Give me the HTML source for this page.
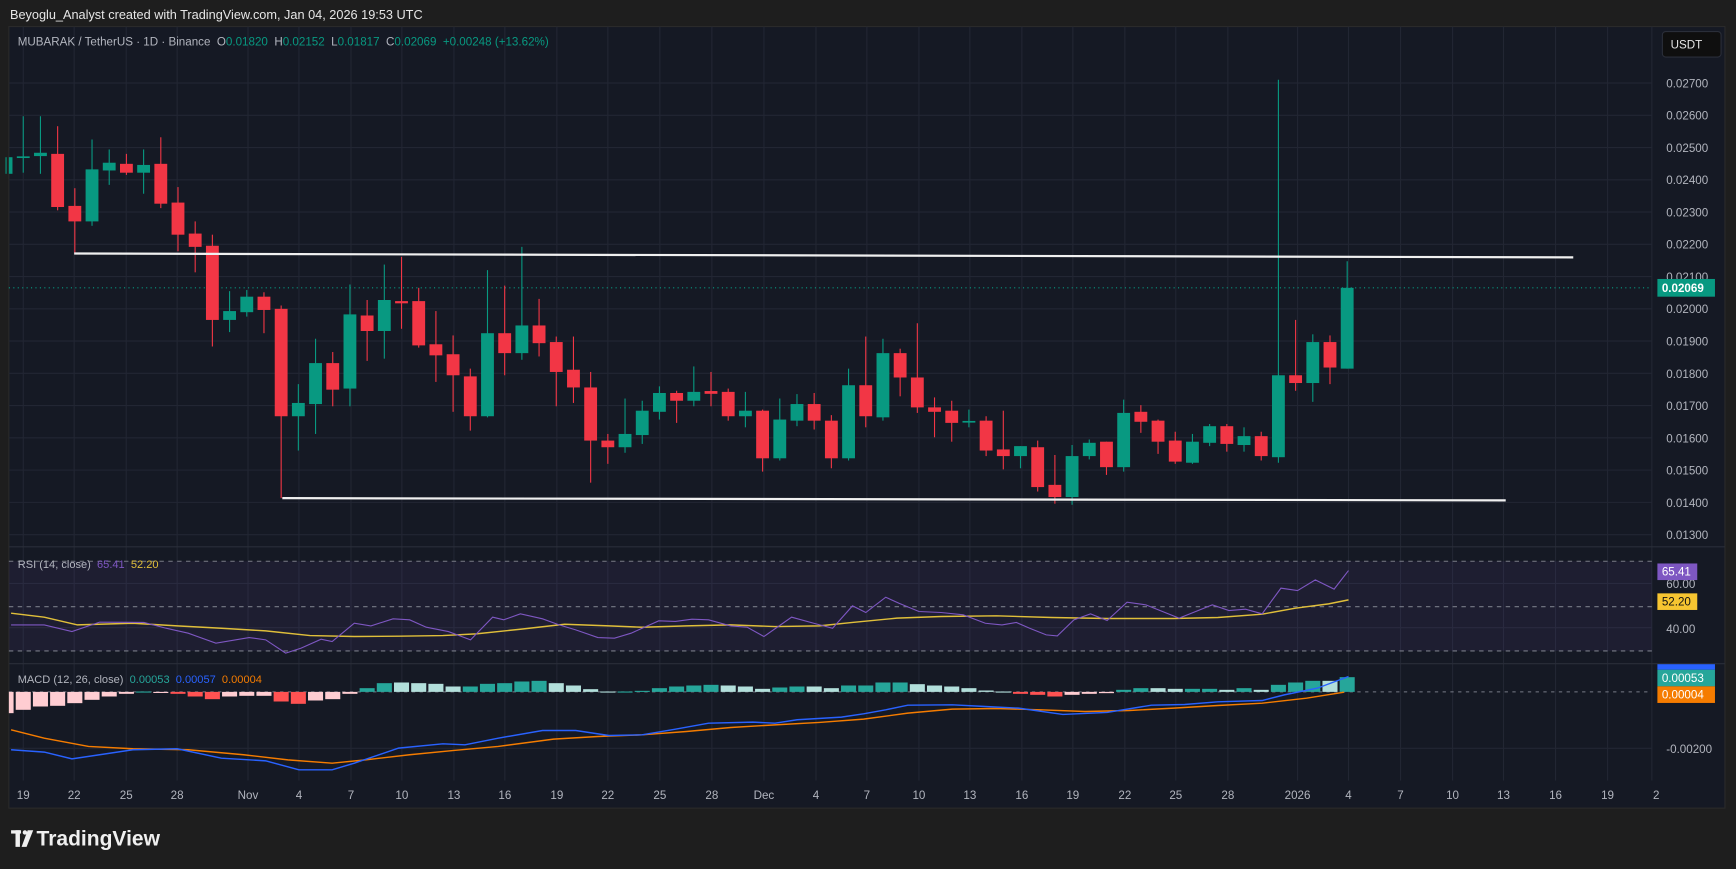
<!DOCTYPE html>
<html><head><meta charset="utf-8"><style>
html,body{margin:0;padding:0;background:#1e1e1e;overflow:hidden}
svg{display:block}
text{font-family:"Liberation Sans",sans-serif}
.pre{white-space:pre}
</style></head><body>
<svg id="s" width="1736" height="869" viewBox="0 0 1568 785" preserveAspectRatio="none" xmlns="http://www.w3.org/2000/svg">
<rect x="0" y="0" width="1568" height="785" fill="#1e1e1e"/>
<text x="9" y="17" font-size="11.5" fill="#e6e6e6">Beyoglu_Analyst created with TradingView.com, Jan 04, 2026 19:53 UTC</text>
<rect x="8" y="24" width="1550" height="706" fill="#151924" stroke="#2a2a2a" stroke-width="1"/>
<g id="grid" stroke="#222633" stroke-width="1"></g>
<line x1="8" y1="494" x2="1558" y2="494" stroke="#2a2e39"/>
<line x1="8" y1="599.5" x2="1558" y2="599.5" stroke="#2a2e39"/>
<rect x="8" y="507" width="1484" height="81" fill="#7e57c2" fill-opacity="0.09"/>
<g stroke="#787b86" stroke-dasharray="4,4" stroke-width="1">
<line x1="8" y1="507" x2="1492" y2="507"/><line x1="8" y1="548" x2="1492" y2="548"/><line x1="8" y1="588" x2="1492" y2="588"/>
<line x1="8" y1="625" x2="1492" y2="625" stroke-dasharray="3,4"/>
</g>
<line x1="8" y1="260" x2="1492" y2="260" stroke="#089981" stroke-dasharray="1,3"/>
<g id="candles"></g>
<g id="hist"></g>
<line x1="67" y1="229" x2="1421" y2="232.5" stroke="#f0f0f0" stroke-width="2"/>
<line x1="255" y1="450" x2="1360" y2="452" stroke="#f0f0f0" stroke-width="2"/>
<polyline id="rsima" fill="none" stroke="#e0bf3a" stroke-width="1.3"/>
<polyline id="rsi" fill="none" stroke="#7e57c2" stroke-width="1"/>
<polyline id="sig" fill="none" stroke="#f57c00" stroke-width="1.3"/>
<polyline id="macd" fill="none" stroke="#2962ff" stroke-width="1.3"/>
<text class="pre" x="16" y="41" font-size="10.5" fill="#b2b5be">MUBARAK / TetherUS · 1D · Binance  <tspan>O</tspan><tspan fill="#089981">0.01820</tspan>  <tspan>H</tspan><tspan fill="#089981">0.02152</tspan>  <tspan>L</tspan><tspan fill="#089981">0.01817</tspan>  <tspan>C</tspan><tspan fill="#089981">0.02069  +0.00248 (+13.62%)</tspan></text>
<rect x="1501.5" y="28.5" width="53" height="23" rx="3" fill="#0f0f0f" stroke="#2a2e39"/>
<text x="1509" y="44" font-size="10.5" fill="#e6e6e6">USDT</text>
<g id="plab" font-size="10.5" fill="#b2b5be"></g>
<rect x="1497" y="252" width="52" height="16" fill="#089981"/>
<text x="1501" y="264" font-size="10.5" fill="#fff" font-weight="bold">0.02069</text>
<text class="pre" x="16" y="513" font-size="10" fill="#b2b5be">RSI (14, close)  <tspan fill="#7e57c2">65.41</tspan>  <tspan fill="#e0bf3a">52.20</tspan></text>
<text x="1505" y="531" font-size="10.5" fill="#b2b5be">60.00</text>
<text x="1505" y="572" font-size="10.5" fill="#b2b5be">40.00</text>
<rect x="1497" y="509" width="36" height="15" fill="#7e57c2"/><text x="1501" y="520" font-size="10.5" fill="#fff">65.41</text>
<rect x="1497" y="536" width="36" height="15" fill="#f7c531"/><text x="1501" y="547" font-size="10.5" fill="#111">52.20</text>
<text class="pre" x="16" y="617" font-size="10" fill="#b2b5be">MACD (12, 26, close)  <tspan fill="#26a69a">0.00053</tspan>  <tspan fill="#2962ff">0.00057</tspan>  <tspan fill="#f57c00">0.00004</tspan></text>
<rect x="1497" y="600" width="52" height="5" fill="#2962ff"/>
<rect x="1497" y="605" width="52" height="15" fill="#26a69a"/><text x="1501" y="616" font-size="10.5" fill="#fff">0.00053</text>
<rect x="1497" y="620" width="52" height="15" fill="#f57c00"/><text x="1501" y="631" font-size="10.5" fill="#fff">0.00004</text>
<text x="1505" y="680" font-size="10.5" fill="#b2b5be">-0.00200</text>
<g id="tlab" font-size="10.5" fill="#b2b5be" text-anchor="middle">
<text x="21" y="722">19</text><text x="67" y="722">22</text><text x="114" y="722">25</text><text x="160" y="722">28</text><text x="224" y="722">Nov</text><text x="270" y="722">4</text><text x="317" y="722">7</text><text x="363" y="722">10</text><text x="410" y="722">13</text><text x="456" y="722">16</text><text x="503" y="722">19</text><text x="549" y="722">22</text><text x="596" y="722">25</text><text x="643" y="722">28</text><text x="690" y="722">Dec</text><text x="737" y="722">4</text><text x="783" y="722">7</text><text x="830" y="722">10</text><text x="876" y="722">13</text><text x="923" y="722">16</text><text x="969" y="722">19</text><text x="1016" y="722">22</text><text x="1062" y="722">25</text><text x="1109" y="722">28</text><text x="1172" y="722">2026</text><text x="1218" y="722">4</text><text x="1265" y="722">7</text><text x="1312" y="722">10</text><text x="1358" y="722">13</text><text x="1405" y="722">16</text><text x="1452" y="722">19</text><text x="1496" y="722">2</text>
</g>
<g fill="#f0f0f0"><rect x="10" y="750" width="9" height="3"/><rect x="14" y="750" width="4" height="15"/><circle cx="22.5" cy="752" r="2"/><path d="M25 750 L30 750 L24 765 L19.5 765 Z"/></g>
<text x="33" y="764" font-size="19" font-weight="bold" fill="#f0f0f0">TradingView</text>
</svg>
<script>
var NS="http://www.w3.org/2000/svg";
function el(p,t,a){var e=document.createElementNS(NS,t);for(var k in a)e.setAttribute(k,a[k]);document.getElementById(p).appendChild(e);return e;}
var xs=[21,67,114,160,224,270,317,363,410,456,503,549,596,643,690,737,783,830,876,923,969,1016,1062,1109,1172,1218,1265,1312,1358,1405,1452,1492];
xs.forEach(function(x){el("grid","line",{x1:x,y1:24,x2:x,y2:705});});
var labs=["0.02700","0.02600","0.02500","0.02400","0.02300","0.02200","0.02100","0.02000","0.01900","0.01800","0.01700","0.01600","0.01500","0.01400","0.01300"];
labs.forEach(function(l,i){var y=75+i*29.14;el("grid","line",{x1:8,y1:y,x2:1492,y2:y});var t=el("plab","text",{x:1505,y:y+4});t.textContent=l;});
[527,567].forEach(function(y){el("grid","line",{x1:8,y1:y,x2:1492,y2:y});});
el("grid","line",{x1:8,y1:676,x2:1492,y2:676});
var C=[[-1,157,142,142,157],[0,142,142,105,156],[1,141,138,105,157],[2,139,187,114,190],[3,186,200,170,229],[4,200,153,126,204],[5,154,147,135,167],[6,148,156,139,158],[7,156,149,135,175],[8,148,184,124,188],[9,183,212,169,227],[10,211,223,200,246],[11,222,289,212,313],[12,289,281,263,300],[13,282,268,262,286],[14,268,280,264,301],[15,279,376,276,450],[16,376,364,347,407],[17,365,328,306,392],[18,328,352,318,367],[19,351,284,257,367],[20,285,299,271,326],[21,299,271,239,324],[22,272,274,232,297],[23,272,312,260,314],[24,311,321,281,345],[25,320,339,303,372],[26,340,376,333,389],[27,376,301,244,377],[28,301,319,258,339],[29,319,294,223,325],[30,294,310,270,322],[31,309,336,304,367],[32,334,350,304,364],[33,350,398,336,436],[34,398,404,392,419],[35,404,392,360,409],[36,393,371,362,401],[37,372,355,349,379],[38,355,362,353,382],[39,362,354,331,367],[40,354,355,336,367],[41,354,376,351,380],[42,376,371,354,386],[43,371,414,370,426],[44,414,379,360,416],[45,380,365,356,385],[46,365,380,355,388],[47,380,414,375,423],[48,414,348,333,416],[49,348,376,304,386],[50,377,319,306,380],[51,319,341,315,358],[52,341,368,292,373],[53,368,372,359,395],[54,371,382,362,399],[55,381,381,370,386],[56,380,407,376,412],[57,406,412,371,424],[58,412,403,403,423],[59,404,440,398,444],[60,438,449,411,455],[61,449,412,402,456],[62,412,400,397,415],[63,399,422,399,429],[64,422,373,361,426],[65,372,381,366,391],[66,380,399,379,410],[67,398,417,390,419],[68,418,399,392,419],[69,400,385,383,403],[70,385,401,383,408],[71,402,394,386,408],[72,394,412,390,416],[73,413,339,72,418],[74,339,346,289,353],[75,346,309,302,363],[76,309,332,303,347],[77,333,260,236,333]];
C.forEach(function(c){var x=21+15.53*c[0];var up=c[2]<=c[1]&&!(c[2]==c[1]&&c[0]!=0&&c[0]!=55);var col=up?"#089981":"#f23645";
el("candles","line",{x1:x,y1:c[3],x2:x,y2:c[4],stroke:col,"stroke-width":1});
var t=Math.min(c[1],c[2]),b=Math.max(c[1],c[2]);if(b-t<1.5){t-=0.75;b+=0.75;}
el("candles","rect",{x:Math.max(8,x-5.8),y:t,width:11.6-(x-5.8<8?8-(x-5.8):0),height:b-t,fill:col});});
var H=[[-1,520,"L"],[0,510,"L"],[1,500,"L"],[2,498,"L"],[3,490,"L"],[4,480,"L"],[5,470,"L"],[6,462,"L"],[7,455,"T"],[8,458,"r"],[9,462,"R"],[10,470,"R"],[11,478,"R"],[12,470,"r"],[13,468,"r"],[14,468,"r"],[15,485,"R"],[16,492,"R"],[17,482,"r"],[18,478,"r"],[19,462,"r"],[20,445,"T"],[21,430,"T"],[22,428,"l"],[23,430,"l"],[24,432,"l"],[25,440,"l"],[26,440,"T"],[27,432,"T"],[28,430,"T"],[29,425,"T"],[30,423,"T"],[31,430,"l"],[32,437,"l"],[33,448,"l"],[34,455,"l"],[35,455,"T"],[36,453,"T"],[37,445,"T"],[38,440,"T"],[39,437,"T"],[40,435,"T"],[41,437,"l"],[42,440,"l"],[43,447,"l"],[44,443,"T"],[45,440,"T"],[46,440,"l"],[47,445,"l"],[48,437,"T"],[49,437,"T"],[50,428,"T"],[51,428,"T"],[52,433,"l"],[53,437,"l"],[54,440,"l"],[55,445,"l"],[56,452,"l"],[57,455,"l"],[58,462,"R"],[59,465,"R"],[60,470,"R"],[61,465,"r"],[62,462,"r"],[63,460,"r"],[64,450,"T"],[65,445,"T"],[66,445,"l"],[67,447,"l"],[68,447,"T"],[69,447,"T"],[70,450,"l"],[71,445,"T"],[72,450,"l"],[73,435,"T"],[74,428,"T"],[75,423,"T"],[76,423,"l"],[77,412,"T"]];
var cols={L:"#ffcdd2",R:"#ff5252",r:"#ffcdd2",T:"#26a69a",l:"#b2dfdb"};
H.forEach(function(h){var x=21+15.53*h[0];var z=625;var y=487.7+0.301*h[1];var t=Math.min(y,z),b=Math.max(y,z);
var x0=Math.max(8,x-6.8);el("hist","rect",{x:x0,y:t,width:x+6.8-x0,height:Math.max(1,b-t),fill:cols[h[2]]});});
function pl(id,pts){document.getElementById(id).setAttribute("points",pts.map(function(p){return p[0]+","+(487.7+0.301*p[1]).toFixed(1)}).join(" "));}
pl("rsi",[[10,255],[40,255],[65,275],[90,247],[130,248],[150,265],[170,280],[195,310],[225,293],[240,300],[258,340],[272,325],[290,298],[300,305],[320,250],[335,258],[355,237],[370,240],[385,262],[405,275],[425,300],[445,232],[455,240],[470,222],[490,237],[505,255],[520,270],[540,293],[555,295],[570,280],[595,243],[610,245],[625,238],[640,240],[660,258],[675,262],[690,290],[715,232],[735,250],[752,265],[770,198],[782,218],[800,172],[812,190],[830,215],[850,218],[870,225],[890,250],[905,255],[918,248],[930,265],[945,285],[955,288],[970,240],[985,222],[1000,242],[1018,187],[1035,195],[1050,215],[1065,235],[1080,215],[1095,195],[1110,212],[1125,208],[1140,222],[1157,145],[1172,152],[1188,120],[1205,148],[1218,92]]);
pl("rsima",[[10,220],[40,232],[70,255],[120,250],[160,258],[200,265],[240,273],[280,287],[320,290],[360,289],[400,287],[430,282],[470,268],[510,253],[550,258],[580,262],[620,258],[660,255],[700,260],[740,258],[770,248],[810,235],[850,230],[900,228],[950,233],[1000,236],[1060,236],[1100,233],[1140,223],[1170,205],[1200,192],[1218,180]]);
pl("macd",[[10,630],[40,637],[65,657],[90,645],[120,630],[160,627],[200,655],[240,663],[270,690],[300,690],[320,670],[360,625],[400,612],[420,615],[450,595],[490,572],[520,572],[550,587],[580,585],[610,568],[640,550],[680,547],[700,550],[720,540],[760,532],[780,522],[800,510],[820,496],[860,495],[890,500],[920,505],[960,524],[1000,518],[1040,496],[1070,494],[1100,486],[1140,482],[1160,465],[1190,445],[1218,410]]);
pl("sig",[[10,570],[40,595],[80,620],[120,627],[170,630],[220,645],[260,660],[300,670],[330,660],[370,645],[410,632],[450,620],[500,598],[540,590],[580,585],[620,575],[660,563],[700,555],[740,548],[780,538],[820,520],[860,508],[900,506],[940,510],[980,515],[1020,512],[1060,505],[1100,497],[1140,490],[1180,475],[1214,457]]);
</script>
</body></html>
